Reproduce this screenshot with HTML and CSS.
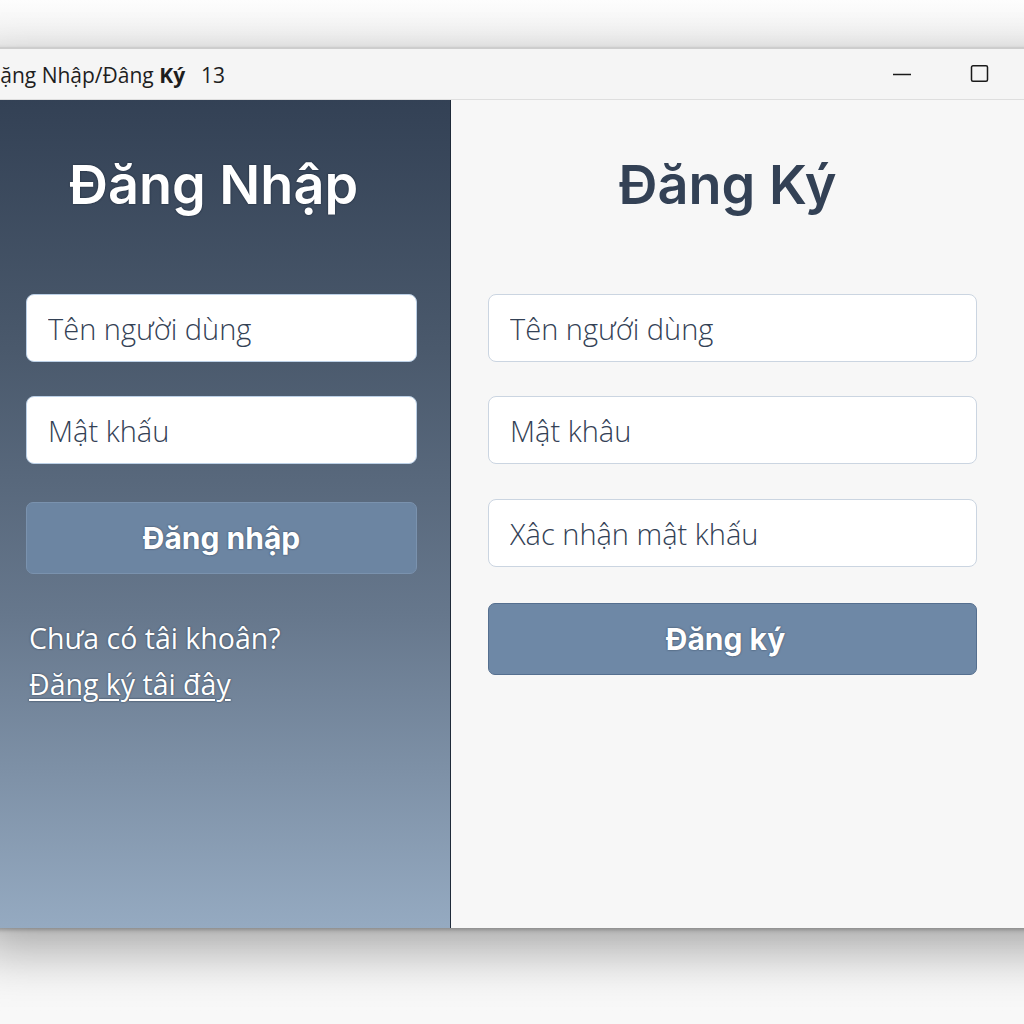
FILE: index.html
```html
<!DOCTYPE html>
<html lang="vi">
<head>
<meta charset="utf-8">
<title>Đăng Nhập/Đăng Ký</title>
<link rel="stylesheet" href="styles.css">
</head>
<body>
<div class="window">
  <div class="titlebar">
    <div class="title">Đặng Nhập/Đâng <b>Ký</b><span class="num">13</span></div>
    <div class="controls">
      <div class="ctl"><svg width="20" height="20" viewBox="0 0 20 20"><line x1="1" y1="10.5" x2="19" y2="10.5" stroke="#1a1a1a" stroke-width="1.5"/></svg></div>
      <div class="ctl"><svg width="20" height="20" viewBox="0 0 20 20"><rect x="1.5" y="1.75" width="16" height="15.5" rx="1.5" fill="none" stroke="#1a1a1a" stroke-width="1.5"/></svg></div>
      <div class="ctl"><svg width="20" height="20" viewBox="0 0 20 20"><path d="M3 3 L17 17 M17 3 L3 17" stroke="#1a1a1a" stroke-width="1.5"/></svg></div>
    </div>
  </div>
  <div class="content">
    <section class="login">
      <h1 class="login-title">Đăng Nhập</h1>
      <form class="login-form">
        <input class="field field-dark" type="text" placeholder="Tên người dùng">
        <input class="field field-dark" type="password" placeholder="Mật khấu">
        <button type="button" class="btn btn-login">Đăng nhập</button>
      </form>
      <div class="signup-hint">
        <div>Chưa có tâi khoân?</div>
        <a href="#" class="signup-link">Đăng ký tâi đây</a>
      </div>
    </section>
    <section class="register">
      <div class="register-col">
        <h1 class="register-title">Đăng Ký</h1>
        <form class="register-form">
          <input class="field" type="text" placeholder="Tên ngưới dùng">
          <input class="field" type="password" placeholder="Mật khâu">
          <input class="field" type="password" placeholder="Xâc nhận mật khấu">
          <button type="button" class="btn btn-register">Đăng ký</button>
        </form>
      </div>
    </section>
  </div>
</div>
</body>
</html>
```
FILE: styles.css
```css
html, body {
  margin: 0;
  padding: 0;
}
body {
  width: 1024px;
  height: 1024px;
  overflow: hidden;
  background: linear-gradient(#fdfdfd 0px, #f0f0f0 46px, #f6f6f6 200px, #f8f8f8 100%);
  font-family: "Open Sans", "Noto Sans", sans-serif;
}
.window {
  margin-top: 47px;
  margin-left: -24px;
  width: 1121px;
  border-top: 2px solid #cdcdcd;
  box-shadow: 0 22px 50px rgba(0, 0, 0, 0.33), 0 2px 4px rgba(0,0,0,0.25);
  background: #f7f7f7;
}
.titlebar {
  height: 50px;
  background: #f5f5f5;
  border-bottom: 1px solid #dedede;
  display: flex;
  align-items: center;
  justify-content: space-between;
}
.title {
  padding-left: 9px;
  font-family: "Open Sans", sans-serif;
  font-size: 21px;
  color: #1e1e1e;
  padding-top: 2px;
}
.title b {
  font-weight: 700;
}
.title .num {
  margin-left: 16px;
}
.controls {
  display: flex;
  height: 100%;
}
.ctl {
  width: 78px;
  display: flex;
  align-items: center;
  justify-content: center;
}
.content {
  display: flex;
  height: 828px;
}
.login {
  width: 475px;
  flex: none;
  border-right: 1px solid #1f2a3a;
  background: linear-gradient(180deg, #334155 0%, #4a596c 30%, #66778c 62%, #95aac1 100%);
  box-sizing: border-box;
  padding: 0 33px 0 50px;
  display: flex;
  flex-direction: column;
}
.login-title, .register-title {
  margin: 53px 0 0;
  font-family: Inter, sans-serif;
  font-weight: 600;
  font-size: 54px;
  line-height: 64px;
  text-align: center;
}
.login-title {
  color: #ffffff;
  margin-left: -16px;
  text-shadow: 0 0 2px rgba(20, 30, 45, 0.9);
}
.register-title {
  color: #334155;
}
.login-form, .register-form {
  display: flex;
  flex-direction: column;
  margin-top: 77px;
}
.field {
  height: 68px;
  box-sizing: border-box;
  border: 1px solid #cbd5e1;
  border-radius: 8px;
  background: #ffffff;
  padding: 0 21px;
  font-family: "Open Sans", sans-serif;
  font-weight: 300;
  font-size: 29px;
  color: #334155;
  margin: 0 0 34px;
  outline: none;
}
.field::placeholder {
  color: #334155;
  opacity: 1;
}
.field-dark {
  border-color: #bcd0e6;
}
.btn {
  height: 72px;
  border-radius: 7px;
  font-family: Inter, sans-serif;
  font-weight: 700;
  font-size: 30px;
  color: #ffffff;
  text-shadow: 0 0 2px rgba(30, 45, 65, 0.8);
  cursor: pointer;
}
.btn-login {
  margin-top: 4px;
  background: #6c85a2;
  border: 1px solid #7a92ae;
}
.btn-register {
  margin-top: 2px;
  padding-right: 20px;
  background: #6e88a6;
  border: 1px solid #556f8f;
}
.signup-hint {
  margin-top: 41px;
  margin-left: 3px;
  font-family: "Open Sans", sans-serif;
  font-size: 28.5px;
  line-height: 46px;
  color: #ffffff;
  text-shadow: 0 0 2px rgba(30, 45, 65, 0.8);
}
.signup-link {
  color: #ffffff;
  text-decoration: underline;
  text-decoration-thickness: 2px;
  text-underline-offset: 4px;
}
.register {
  flex: 1;
  background: #f7f7f7;
}
.register-col {
  width: 489px;
  margin-left: 37px;
  display: flex;
  flex-direction: column;
}
.register-title {
  margin-left: -10px;
}
.register-form .field {
  margin-bottom: 34px;
}
.register-form .field:nth-child(2) {
  margin-bottom: 35px;
}
```
